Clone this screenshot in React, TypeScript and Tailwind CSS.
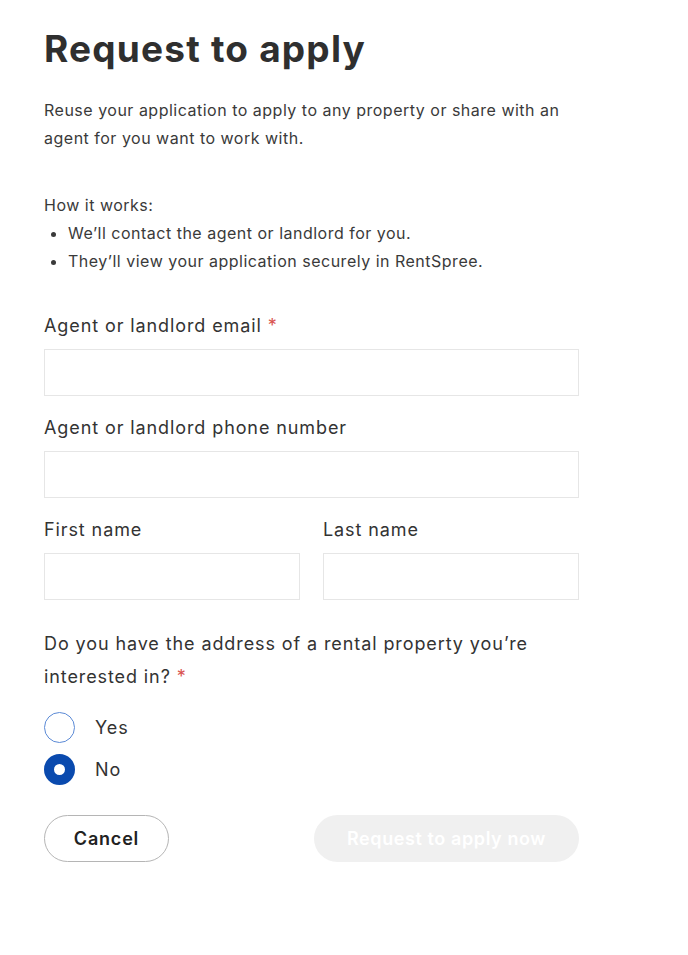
import React from "react";

export default function App() {
  const font = { fontFamily: "Inter, 'Noto Sans', sans-serif" };
  return (
    <div className="min-h-[955px] bg-white text-[#333333]" style={font}>
      <div className="w-[535px] ml-[44px] pt-[25px]">
        <h1 className="text-[37px] leading-[48px] font-bold tracking-[1.2px] text-[#2f2f2f]">Request to apply</h1>
        <p className="mt-[23px] text-[16px] leading-[28px] tracking-[0.5px] text-[#3a3a3a]">
          Reuse your application to apply to any property or share with an agent for you want to work with.
        </p>
        <p className="mt-[39px] text-[16px] leading-[28px] tracking-[0.5px] text-[#3a3a3a]">How it works:</p>
        <ul className="text-[16px] leading-[28px] tracking-[0.5px] text-[#3a3a3a] list-disc pl-[24px]">
          <li>We’ll contact the agent or landlord for you.</li>
          <li>They’ll view your application securely in RentSpree.</li>
        </ul>
        <div className="mt-[37px]">
          <label className="block text-[18px] leading-[28px] tracking-[0.9px] text-[#333333]">
            Agent or landlord email <span className="text-[#d9534f]">*</span>
          </label>
          <input className="mt-[9px] block w-full h-[47px] border border-[#e6e6e6] outline-none" />
        </div>
        <div className="mt-[18px]">
          <label className="block text-[18px] leading-[28px] tracking-[0.9px] text-[#333333]">Agent or landlord phone number</label>
          <input className="mt-[9px] block w-full h-[47px] border border-[#e6e6e6] outline-none" />
        </div>
        <div className="mt-[18px] grid grid-cols-2 gap-[23px]">
          <div>
            <label className="block text-[18px] leading-[28px] tracking-[0.9px] text-[#333333]">First name</label>
            <input className="mt-[9px] block w-full h-[47px] border border-[#e6e6e6] outline-none" />
          </div>
          <div>
            <label className="block text-[18px] leading-[28px] tracking-[0.9px] text-[#333333]">Last name</label>
            <input className="mt-[9px] block w-full h-[47px] border border-[#e6e6e6] outline-none" />
          </div>
        </div>
        <p className="mt-[27px] text-[18px] leading-[33px] tracking-[0.9px] text-[#333333] w-[500px]">
          Do you have the address of a rental property you’re interested in? <span className="text-[#d9534f]">*</span>
        </p>
        <div className="mt-[19px] flex flex-col gap-[11px]">
          <div className="flex items-center gap-[20px]">
            <span className="w-[31px] h-[31px] rounded-full border-[1.5px] border-[#5b8ad6] bg-white" />
            <span className="text-[18px] leading-[28px] tracking-[0.9px]">Yes</span>
          </div>
          <div className="flex items-center gap-[20px]">
            <span className="w-[31px] h-[31px] rounded-full border-[10px] border-[#0a4aae] bg-white" />
            <span className="text-[18px] leading-[28px] tracking-[0.9px]">No</span>
          </div>
        </div>
        <div className="mt-[30px] flex justify-between">
          <button className="w-[125px] h-[47px] rounded-full border border-[#b5b5b5] bg-white text-[18px] font-semibold tracking-[0.8px] text-[#222222]">
            Cancel
          </button>
          <button className="w-[265px] h-[47px] rounded-full bg-[#f0f0f0] text-[18px] font-semibold tracking-[0.6px] text-white">
            Request to apply now
          </button>
        </div>
      </div>
    </div>
  );
}
